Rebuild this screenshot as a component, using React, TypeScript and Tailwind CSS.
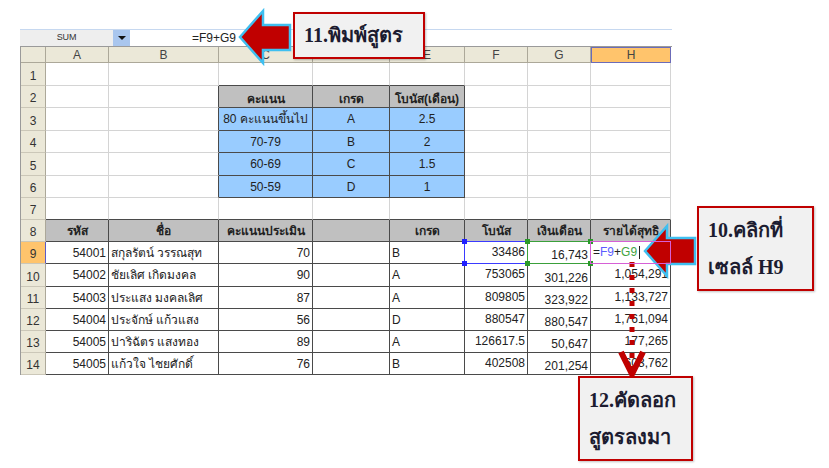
import type { ReactNode } from "react";

const colW = [25, 63, 110, 94, 77, 75, 63, 63, 80];
const rowH = [23, 22, 23, 22, 23, 22, 22, 22, 22, 23, 22, 22, 22, 22];
const colNames = ["A", "B", "C", "D", "E", "F", "G", "H"];

type Cell = {
  t?: ReactNode;
  a?: "l" | "c" | "r";
  v?: "c" | "b" | "t";
  bg?: string;
  b?: boolean;
  extra?: ReactNode;
};

const GRAY = "bg-[#c0c0c0]";
const BLUE = "bg-[#99ccff]";

const people: [string, string, string, string, string, string, string][] = [
  ["54001", "สกุลรัตน์ วรรณสุท", "70", "B", "33486", "16,743", ""],
  ["54002", "ชัยเลิศ เกิดมงคล", "90", "A", "753065", "301,226", "1,054,291"],
  ["54003", "ประแสง มงคลเลิศ", "87", "A", "809805", "323,922", "1,133,727"],
  ["54004", "ประจักษ์ แก้วแสง", "56", "D", "880547", "880,547", "1,761,094"],
  ["54005", "ปาริฉัตร แสงทอง", "89", "A", "126617.5", "50,647", "177,265"],
  ["54005", "แก้วใจ ไชยศักดิ์", "76", "B", "402508", "201,254", "603,762"],
];

function Handles({ color }: { color: string }) {
  return (
    <>
      <span className={`absolute -left-[3px] -top-[3px] h-[5px] w-[5px] ${color}`} />
      <span className={`absolute -right-[3px] -top-[3px] h-[5px] w-[5px] ${color}`} />
      <span className={`absolute -left-[3px] -bottom-[3px] h-[5px] w-[5px] ${color}`} />
      <span className={`absolute -right-[3px] -bottom-[3px] h-[5px] w-[5px] ${color}`} />
    </>
  );
}

function buildCells() {
  const m: Record<string, Cell> = {};
  m["C2"] = { t: "คะแนน", a: "c", v: "b", bg: GRAY, b: true };
  m["D2"] = { t: "เกรด", a: "c", v: "b", bg: GRAY, b: true };
  m["E2"] = { t: "โบนัส(เดือน)", a: "c", v: "b", bg: GRAY, b: true };
  const grades = [
    ["80 คะแนนขึ้นไป", "A", "2.5"],
    ["70-79", "B", "2"],
    ["60-69", "C", "1.5"],
    ["50-59", "D", "1"],
  ];
  grades.forEach((g, i) => {
    m[`C${i + 3}`] = { t: g[0], a: "c", bg: BLUE };
    m[`D${i + 3}`] = { t: g[1], a: "c", bg: BLUE };
    m[`E${i + 3}`] = { t: g[2], a: "c", bg: BLUE };
  });
  const heads = ["รหัส", "ชื่อ", "คะแนนประเมิน", "", "เกรด", "โบนัส", "เงินเดือน", "รายได้สุทธิ"];
  heads.forEach((h, i) => {
    m[`${colNames[i]}8`] = { t: h, a: "c", bg: GRAY, b: true };
  });
  people.forEach((p, i) => {
    const r = i + 9;
    m[`A${r}`] = { t: p[0], a: "r" };
    m[`B${r}`] = { t: p[1], a: "l" };
    m[`C${r}`] = { t: p[2], a: "r" };
    m[`E${r}`] = { t: p[3], a: "l" };
    m[`F${r}`] = { t: p[4], a: "r", v: "t" };
    m[`G${r}`] = { t: p[5], a: "r", v: "b" };
    m[`H${r}`] = { t: p[6], a: "r", v: "t" };
  });
  m["F9"].extra = (
    <span className="absolute -left-px -top-px -right-px -bottom-px z-10 border border-[#3a3aff]">
      <Handles color="bg-[#2020ff]" />
    </span>
  );
  m["G9"].extra = (
    <span className="absolute -left-px -top-px -right-px -bottom-px z-10 border border-[#3aa03a]">
      <Handles color="bg-[#2a9a2a]" />
    </span>
  );
  m["H9"] = {
    a: "l",
    v: "t",
    t: (
      <span className="flex items-center">
        <span>=</span>
        <span className="text-[#5b5bff]">F9</span>
        <span>+</span>
        <span className="text-[#3fa43f]">G9</span>
        <span className="ml-[2px] h-[13px] w-px bg-[#222]" />
      </span>
    ),
    extra: <span className="absolute -left-px -top-px -right-px -bottom-px z-10 border border-[#d660d6]" />,
  };
  return m;
}

const dark = (r: number, c: number) =>
  (r >= 2 && r <= 6 && c >= 3 && c <= 5) || (r >= 8 && r <= 14 && c >= 1 && c <= 8);

function Sheet() {
  const cells = buildCells();
  const out: ReactNode[] = [];
  out.push(<div key="corner" className="border-b border-r border-[#aca899] bg-[#ebe8d8]" />);
  colNames.forEach((n) => {
    const sel = n === "H";
    out.push(
      <div
        key={`h${n}`}
        className={
          sel
            ? "flex items-center justify-center border border-[#6b6bb8] bg-[#ffc46c] text-[12px] leading-none text-[#444]"
            : "flex items-center justify-center border-b border-r border-[#aca899] bg-[#ebe8d8] text-[12px] leading-none text-[#444]"
        }
      >
        {n}
      </div>
    );
  });
  for (let r = 1; r <= 14; r++) {
    const sel = r === 9;
    out.push(
      <div
        key={`r${r}`}
        className={`flex items-end justify-center pb-[3px] text-[12px] leading-none text-[#333] border-b ${
          sel
            ? "bg-[#ffc46c] border-r border-r-[#5b5bc8] border-b-[#cbc7b8]"
            : "bg-[#ebe8d8] border-r border-r-[#aca899] border-b-[#cbc7b8]"
        }`}
      >
        {r}
      </div>
    );
    for (let c = 1; c <= 8; c++) {
      const cell = cells[`${colNames[c - 1]}${r}`] || {};
      const rd = dark(r, c) || dark(r, c + 1);
      const bd = dark(r, c) || dark(r + 1, c);
      const just = cell.a === "c" ? "justify-center" : cell.a === "r" ? "justify-end" : "justify-start";
      const items = cell.v === "b" ? "items-end pb-[1px]" : cell.v === "t" ? "items-start pt-[3px]" : "items-center";
      out.push(
        <div
          key={`c${r}-${c}`}
          className={`relative flex whitespace-nowrap px-[2px] text-[12px] leading-[14px] text-[#222] border-r border-b ${just} ${items} ${
            cell.bg ?? "bg-white"
          } ${cell.b ? "font-bold" : ""} ${rd ? "border-r-[#4a4a4a]" : "border-r-[#d4d4d4]"} ${
            bd ? "border-b-[#4a4a4a]" : "border-b-[#d4d4d4]"
          }`}
        >
          {cell.t}
          {cell.extra}
        </div>
      );
    }
  }
  return (
    <div
      className="grid border-l border-t border-[#9a9a9a]"
      style={{
        gridTemplateColumns: colW.map((w) => `${w}px`).join(" "),
        gridTemplateRows: ["16px", ...rowH.map((h) => `${h}px`)].join(" "),
      }}
    >
      {out}
    </div>
  );
}

function Callout({ className, lines }: { className: string; lines: ReactNode[] }) {
  return (
    <div
      className={`absolute flex flex-col justify-center border-2 border-[#c00000] bg-[#f1f1f1] px-[9px] font-['Liberation_Serif','Noto_Sans',serif] text-[20px] font-bold leading-[37px] text-[#1c1c30] shadow-[1px_1px_2px_rgba(0,0,0,0.25)] ${className}`}
    >
      {lines.map((l, i) => (
        <div key={i}>{l}</div>
      ))}
    </div>
  );
}

export default function App() {
  return (
    <div className="relative h-[468px] w-[829px] overflow-hidden bg-white font-['Liberation_Sans','Noto_Sans',sans-serif]">
      <div className="pl-[20px] pt-[29px]">
        <div className="flex h-[17px] w-[652px] border-t border-[#c6d8f0]">
          <div className="flex w-[93px] items-center justify-center bg-[#eeeeee] text-[9px] tracking-tight text-[#333]">
            SUM
          </div>
          <div className="flex w-[17px] items-center justify-center bg-[#a9c6ee]">
            <span className="h-0 w-0 border-x-[4px] border-t-[4px] border-x-transparent border-t-[#111]" />
          </div>
          <div className="flex flex-1 items-center bg-white pl-[62px] text-[12px] text-[#222]">=F9+G9</div>
        </div>
        <div className="w-[652px]">
          <Sheet />
        </div>
      </div>

      <svg className="pointer-events-none absolute left-0 top-0" width="829" height="468" viewBox="0 0 829 468">
        <polygon
          points="240,37 263,11 263,25 290,25 290,50 263,50 263,63"
          fill="#c00000"
          stroke="#3fbff0"
          strokeWidth="2.5"
          strokeLinejoin="miter"
        />
        <polygon
          points="645,251 667,226 667,238 695,238 695,264 667,264 667,276"
          fill="#c00000"
          stroke="#3fbff0"
          strokeWidth="2.5"
          strokeLinejoin="miter"
        />
        <line x1="632" y1="262" x2="632" y2="368" stroke="#c00000" strokeWidth="5" strokeDasharray="5 8" />
        <polyline points="621,352 632,374 643,352" fill="none" stroke="#c00000" strokeWidth="6" strokeLinejoin="miter" />
      </svg>

      <Callout className="left-[293px] top-[12px] h-[47px] w-[132px]" lines={["11.พิมพ์สูตร"]} />
      <Callout className="left-[697px] top-[206px] h-[85px] w-[117px]" lines={["10.คลิกที่", "เซลล์ H9"]} />
      <Callout className="left-[578px] top-[376px] h-[85px] w-[115px]" lines={["12.คัดลอก", "สูตรลงมา"]} />
    </div>
  );
}
